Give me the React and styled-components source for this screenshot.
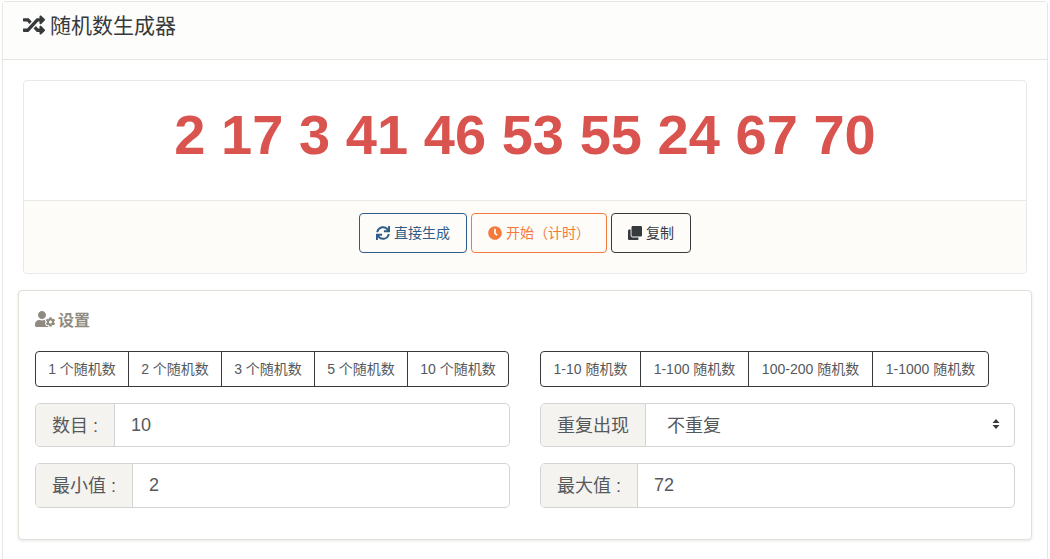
import React from "react";
import styled, { createGlobalStyle } from "styled-components";
import { FaRandom, FaSync, FaClock, FaClone, FaUserCog } from "react-icons/fa";

const Global = createGlobalStyle`
  html, body { margin: 0; padding: 0; background: #fff; }
  body { font-family: "Liberation Sans", "Noto Sans CJK SC", sans-serif; color: #373a3c; }
  * { box-sizing: border-box; }
`;
const Page = styled.div`
  width: 1050px; height: 559px; overflow: hidden; padding: 1px 2px 0 2px;
`;
const Outer = styled.div`
  border: 1px solid #e6e6e4; border-bottom: none; border-radius: 4px 4px 0 0; height: 558px;
`;
const Header = styled.div`
  height: 58px; background: #fdfdfb; border-bottom: 1px solid #e6e6e4;
  display: flex; align-items: center; gap: 5px; padding: 0 0 13px 20px;
  font-size: 21px; color: #373a3c;
  svg { width: 22px; height: 22px; margin-top: 1px; }
`;
const Body = styled.div`
  padding: 20px 15px 0 15px;
`;
const ResultCard = styled.div`
  margin: 0 5px; height: 194px; border: 1px solid #e8e8e6; border-radius: 4px; overflow: hidden;
`;
const Numbers = styled.div`
  height: 119px; display: flex; align-items: center; justify-content: center; padding-bottom: 12px;
  font-size: 56px; font-weight: 700; color: #d9534f; word-spacing: 0.1px;
`;
const Actions = styled.div`
  height: 73px; background: #fdfcf9; border-top: 1px solid #e8e8e6;
  display: flex; justify-content: center; align-items: flex-start; gap: 4px; padding-top: 12px;
`;
const ActionBtn = styled.button`
  height: 40px; width: ${p => p.$w}px; padding: 0 0 2px; background: transparent;
  border: 1px solid ${p => p.$c}; border-radius: 4px; color: ${p => p.$c};
  font: 14px "Liberation Sans", "Noto Sans CJK SC", sans-serif;
  display: inline-flex; align-items: center; justify-content: center; gap: 4px;
  svg { width: 14px; height: 14px; margin-top: 1px; }
`;
const Settings = styled.div`
  margin-top: 16px; height: 250px; background: #fff; border: 1px solid #e2e0d9; border-radius: 4px;
  box-shadow: 0 1px 3px rgba(0,0,0,.1); padding: 18px 16px 0 16px;
`;
const Title = styled.div`
  display: flex; align-items: center; gap: 3px; height: 20px;
  font-size: 16px; font-weight: 700; color: #8f8b80;
  svg { width: 20px; height: 16px; }
`;
const Grid = styled.div`
  display: grid; grid-template-columns: 475px 475px; column-gap: 30px; margin-top: 22px;
`;
const Col = styled.div`
  display: flex; flex-direction: column; align-items: flex-start;
`;
const BtnGroup = styled.div`
  display: flex; height: 36px; border: 1px solid #373a3c; border-radius: 4px; margin-bottom: 16px;
`;
const GroupBtn = styled.button`
  height: 100%; width: ${p => p.$w}px; padding: 0 0 2px; background: transparent; border: none;
  border-left: ${p => (p.$first ? "none" : "1px solid #373a3c")};
  font: 14px "Liberation Sans", "Noto Sans CJK SC", sans-serif; color: #55595c;
`;
const Field = styled.div`
  width: 475px; height: ${p => p.$h}px; display: flex; border: 1px solid #d4d4d4; border-radius: 5px;
  margin-bottom: ${p => p.$mb}px; overflow: hidden; font-size: 18px; color: #55595c;
`;
const Addon = styled.div`
  width: ${p => p.$w}px; flex: none; background: #f5f3ef; border-right: 1px solid #d4d4d4;
  display: flex; align-items: center; padding: 0 0 3px 16px; white-space: pre;
`;
const Value = styled.div`
  flex: 1; display: flex; align-items: center; padding-left: 16px; color: #55595c;
`;
const SelectValue = styled(Value)`
  padding: 0 14px 2px 21px; justify-content: space-between;
`;
const Carets = styled.svg`
  width: 8px; height: 12px; fill: #373a3c;
`;

const leftBtns = ["1 个随机数", "2 个随机数", "3 个随机数", "5 个随机数", "10 个随机数"];
const leftW = [92, 93, 93, 93, 101];
const rightBtns = ["1-10 随机数", "1-100 随机数", "100-200 随机数", "1-1000 随机数"];
const rightW = [99, 108, 124, 116];

export default function App() {
  return (
    <Page>
      <Global />
      <Outer>
        <Header><FaRandom />随机数生成器</Header>
        <Body>
          <ResultCard>
            <Numbers>2 17 3 41 46 53 55 24 67 70</Numbers>
            <Actions>
              <ActionBtn $w={108} $c="#2f5d88"><FaSync />直接生成</ActionBtn>
              <ActionBtn $w={136} $c="#f5793b"><FaClock />开始（计时）</ActionBtn>
              <ActionBtn $w={80} $c="#373a3c"><FaClone />复制</ActionBtn>
            </Actions>
          </ResultCard>
          <Settings>
            <Title><FaUserCog />设置</Title>
            <Grid>
              <Col>
                <BtnGroup>
                  {leftBtns.map((t, i) => <GroupBtn key={t} $w={leftW[i]} $first={i === 0}>{t}</GroupBtn>)}
                </BtnGroup>
                <Field $h={44} $mb={16}><Addon $w={79}>数目 :</Addon><Value>10</Value></Field>
                <Field $h={45} $mb={0}><Addon $w={97}>最小值 :</Addon><Value>2</Value></Field>
              </Col>
              <Col>
                <BtnGroup>
                  {rightBtns.map((t, i) => <GroupBtn key={t} $w={rightW[i]} $first={i === 0}>{t}</GroupBtn>)}
                </BtnGroup>
                <Field $h={44} $mb={16}>
                  <Addon $w={105}>重复出现</Addon>
                  <SelectValue>不重复
                    <Carets viewBox="0 0 8 12"><path d="M4 1 7.5 5H.5zM4 11 .5 7h7z" /></Carets>
                  </SelectValue>
                </Field>
                <Field $h={45} $mb={0}><Addon $w={97}>最大值 :</Addon><Value>72</Value></Field>
              </Col>
            </Grid>
          </Settings>
        </Body>
      </Outer>
    </Page>
  );
}
